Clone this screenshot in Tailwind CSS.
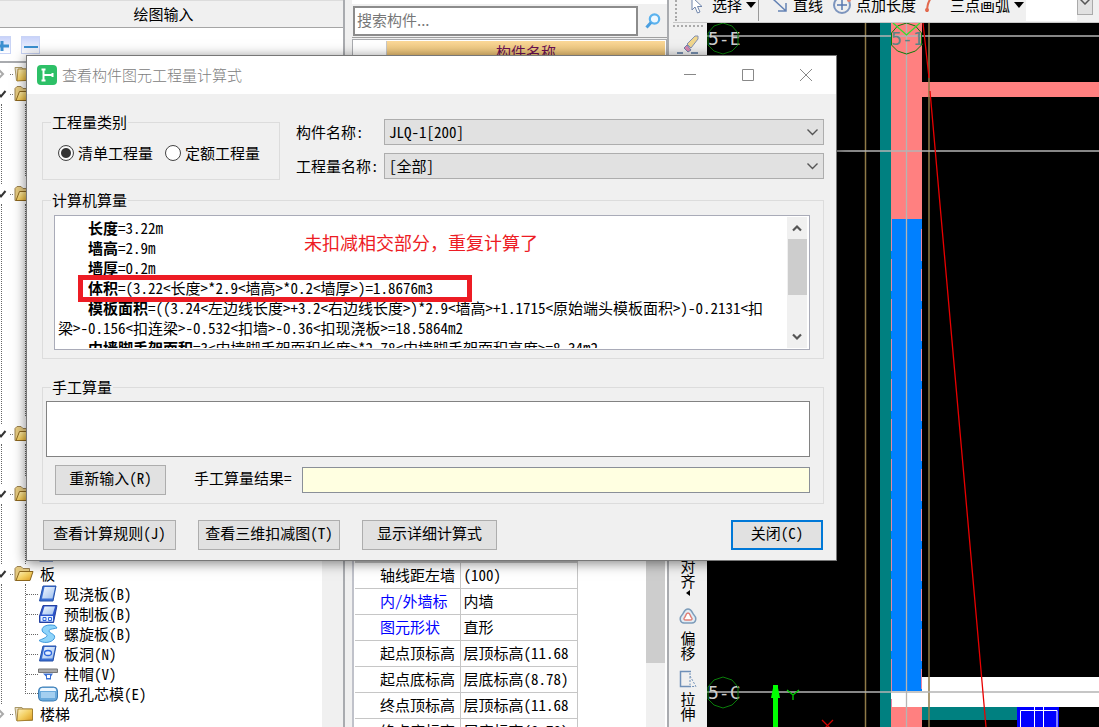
<!DOCTYPE html>
<html lang="zh-CN">
<head>
<meta charset="utf-8">
<title>查看构件图元工程量计算式</title>
<script src="https://cdn.jsdelivr.net/npm/@tailwindcss/browser@4"></script>
</head>
<body class="relative h-screen overflow-hidden bg-[#f0f0f0] font-['Noto_Sans_Mono_CJK_SC','Noto_Sans_CJK_SC',monospace] text-[15px] leading-5 text-black">

<svg class="absolute h-0 w-0" aria-hidden="true">
  <defs>
    <linearGradient id="gold" x1="0" y1="0" x2="1" y2="1"><stop offset="0" stop-color="#fff3c0"/><stop offset=".5" stop-color="#f3cf62"/><stop offset="1" stop-color="#dc9a20"/></linearGradient>
    <linearGradient id="sky" x1="0" y1="0" x2="1" y2="1"><stop offset="0" stop-color="#f2f8ff"/><stop offset="1" stop-color="#9fc0ee"/></linearGradient>
    <symbol id="closed" viewBox="0 0 20 20"><path d="M1 3.500h7l1 1.500h9.500v11.500h-16z" fill="#e8e0c8" stroke="#a89868"/><path d="M4 5h14.500v11L3 17z" fill="url(#gold)" stroke="#9b7423" stroke-width=".8"/></symbol>
    <symbol id="open" viewBox="0 0 20 20"><path d="M1 4.500l2-2h4l2 2h6.500v12H1z" fill="#e5ca80" stroke="#9b8150"/><path d="M5.500 7.500H19L16 16.500H2z" fill="url(#gold)" stroke="#8c661c"/></symbol>
    <symbol id="slab" viewBox="0 0 20 20"><path d="M5 2h13l-3 15H1.500z" fill="#3a6fd4" stroke="#2450a8"/><path d="M6.500 3H17l-2.500 11.500H4z" fill="url(#sky)"/></symbol>
  </defs>
</svg>

<main class="flex h-full">
  <aside class="flex w-[345px] shrink-0 flex-col border-r-2 border-[#a9abaf] bg-white">
    <h2 class="h-7 shrink-0 border-t border-b border-t-[#dcdcdc] border-b-[#a5a5a5] bg-[#f0f0f0] pr-4 text-center leading-[25px]">绘图输入</h2>
    <div class="flex h-[35px] shrink-0 items-start border-b-2 border-[#a9abaf] pt-2">
      <button type="button" aria-label="展开" class="-ml-2 flex h-[18px] w-[19px] items-center justify-center border border-[#c9d4f6] bg-gradient-to-b from-[#c8d2fa] to-white"><svg class="h-4 w-4" viewBox="0 0 16 16"><path d="M1 9h14M8 4v10" stroke="#3c8fd0" stroke-width="3"/></svg></button>
      <button type="button" aria-label="折叠" class="ml-[10px] flex h-[18px] w-[19px] items-center justify-center border border-[#c9d4f6] bg-gradient-to-b from-[#c8d2fa] to-white"><svg class="h-4 w-4" viewBox="0 0 16 16"><path d="M1 10h14" stroke="#3c8fd0" stroke-width="2"/></svg></button>
    </div>
    <div class="flex min-h-0 flex-1">
      <ul class="min-w-0 flex-1 overflow-hidden pt-px">
        <li class="flex h-5 items-center"><svg class="h-5 w-[14px]" viewBox="0 0 14 20" fill="none"><path d="M-1 6l4 4-4 4" stroke="#aaa" stroke-width="2"/><path d="M10 10.500h4" stroke="#777" stroke-dasharray="1 1"/></svg><svg class="h-5 w-5"><use href="#closed"/></svg></li>
        <li>
          <div class="flex h-5 items-center"><svg class="h-5 w-[14px]" viewBox="0 0 14 20" fill="none"><path d="M-1 10l2 2.500L5.500 7" stroke="#333" stroke-width="2"/><path d="M10 10.500h4" stroke="#777" stroke-dasharray="1 1"/></svg><svg class="h-5 w-5"><use href="#open"/></svg></div>
          <div class="ml-px h-20 border-l border-dotted border-[#666]"><div class="ml-[23px] h-[72px] border-l border-dotted border-[#666]"></div></div>
        </li>
        <li>
          <div class="flex h-5 items-center"><svg class="h-5 w-[14px]" viewBox="0 0 14 20" fill="none"><path d="M-1 10l2 2.500L5.500 7" stroke="#333" stroke-width="2"/><path d="M10 10.500h4" stroke="#777" stroke-dasharray="1 1"/></svg><svg class="h-5 w-5"><use href="#open"/></svg></div>
          <div class="ml-px h-[220px] border-l border-dotted border-[#666]"><div class="ml-[23px] h-[212px] border-l border-dotted border-[#666]"></div></div>
        </li>
        <li>
          <div class="flex h-5 items-center"><svg class="h-5 w-[14px]" viewBox="0 0 14 20" fill="none"><path d="M-1 10l2 2.500L5.500 7" stroke="#333" stroke-width="2"/><path d="M10 10.500h4" stroke="#777" stroke-dasharray="1 1"/></svg><svg class="h-5 w-5"><use href="#open"/></svg></div>
          <div class="ml-px h-10 border-l border-dotted border-[#666]"><div class="ml-[23px] h-8 border-l border-dotted border-[#666]"></div></div>
        </li>
        <li>
          <div class="flex h-5 items-center"><svg class="h-5 w-[14px]" viewBox="0 0 14 20" fill="none"><path d="M-1 10l2 2.500L5.500 7" stroke="#333" stroke-width="2"/><path d="M10 10.500h4" stroke="#777" stroke-dasharray="1 1"/></svg><svg class="h-5 w-5"><use href="#open"/></svg></div>
          <div class="ml-px flex h-[60px] items-end border-l border-dotted border-[#666]"><div class="ml-[23px] h-[60px] border-l border-dotted border-[#666]"></div><svg class="ml-3 h-5 w-5"><use href="#slab"/></svg></div>
        </li>
        <li>
          <div class="flex h-5 items-center"><svg class="h-5 w-[14px]" viewBox="0 0 14 20" fill="none"><path d="M-1 10l2 2.500L5.500 7" stroke="#333" stroke-width="2"/><path d="M10 10.500h4" stroke="#777" stroke-dasharray="1 1"/></svg><svg class="mr-[6px] h-5 w-5"><use href="#open"/></svg>板</div>
          <div class="ml-px border-l border-dotted border-[#666]">
            <ul class="ml-[23px]">
              <li class="flex h-5 items-center border-l border-dotted border-[#666]"><span class="w-3 border-t border-dotted border-[#666]"></span><svg class="mr-[6px] h-5 w-5"><use href="#slab"/></svg>现浇板(B)</li>
              <li class="flex h-5 items-center border-l border-dotted border-[#666]"><span class="w-3 border-t border-dotted border-[#666]"></span><svg class="mr-[6px] h-5 w-5" viewBox="0 0 20 20"><path d="M5 1.500h14L15.500 18.500H1.500V12z" fill="#2c55cc" stroke="#2340a0"/><path d="M6.500 2.500H17l-2.500 8H4z" fill="url(#sky)"/><path d="M2.500 12h12.500v5.500H2.500z" fill="#e6f0ff"/><path d="M5 13.500h3v3H5zM10.500 13.500h3v3h-3z" fill="none" stroke="#2c66dd"/></svg>预制板(B)</li>
              <li class="flex h-5 items-center border-l border-dotted border-[#666]"><span class="w-3 border-t border-dotted border-[#666]"></span><svg class="mr-[6px] h-5 w-5" viewBox="0 0 20 20"><path d="M17 1.500C10 0 4 2 4 6c0 3.500 5 3.500 5 5.500S4 15 1 16.500c4 3 12 2.500 15-1.500 3-5-5-5.500-5-8 0-2 4-2 8-3z" fill="#8ed4fa" stroke="#3c98dc"/></svg>螺旋板(B)</li>
              <li class="flex h-5 items-center border-l border-dotted border-[#666]"><span class="w-3 border-t border-dotted border-[#666]"></span><svg class="mr-[6px] h-5 w-5" viewBox="0 0 20 20"><use href="#slab" width="20" height="20"/><ellipse cx="10" cy="9" rx="3.500" ry="2.500" fill="#e3eeff" stroke="#2c66dd" stroke-width="1.300"/></svg>板洞(N)</li>
              <li class="flex h-5 items-center border-l border-dotted border-[#666]"><span class="w-3 border-t border-dotted border-[#666]"></span><svg class="mr-[6px] h-5 w-5" viewBox="0 0 20 20"><path d="M.5 5h19v3.500H.5z" fill="#aaa" stroke="#777"/><path d="M5 9.500h10l-2 3v3H8v-3z" fill="#3a70d4"/><path d="M9 11h3v3H9z" fill="#fff"/></svg>柱帽(V)</li>
              <li class="flex h-5 items-start"><span class="h-[10px] w-[13px] border-b border-l border-dotted border-[#666]"></span><svg class="mr-[6px] h-5 w-5" viewBox="0 0 20 20"><rect x=".5" y="3" width="19" height="14" rx="4" fill="#6aaadc" stroke="#3c7cb4"/><path d="M2 7V6c0-1 1-2 2-2h12c1 0 2 1 2 2v1z" fill="#eef7ff"/><path d="M3 8h14v6H3z" fill="#a4cff0"/></svg>成孔芯模(E)</li>
            </ul>
          </div>
        </li>
        <li class="flex h-5 items-center"><svg class="h-5 w-[14px]" viewBox="0 0 14 20" fill="none"><path d="M-1 6l4 4-4 4" stroke="#aaa" stroke-width="2"/><path d="M10 10.500h4" stroke="#777" stroke-dasharray="1 1"/></svg><svg class="mr-[6px] h-5 w-5"><use href="#closed"/></svg>楼梯</li>
        <li class="flex h-5 items-center pl-[14px]"><svg class="mr-[6px] h-5 w-5"><use href="#closed"/></svg>装修</li>
      </ul>
      <div class="w-[21px] bg-[#f0f0f0]"></div>
    </div>
  </aside>

  <section class="ml-[7px] flex w-[317px] shrink-0 flex-col border-r-2 border-[#a9abaf]">
    <div class="flex h-[38px] shrink-0 items-end border-t-4 border-b border-t-white border-b-[#a0a0a0]">
      <input type="text" aria-label="搜索构件" placeholder="搜索构件..." class="mb-px ml-px h-[30px] w-[285px] border-2 border-[#8c8c8c] bg-white px-[2px] pb-1 font-['Noto_Sans_CJK_SC',sans-serif] placeholder:text-[#777]">
      <button type="button" aria-label="搜索" class="flex h-8 flex-1 items-center justify-center"><svg class="h-4 w-4" viewBox="0 0 16 16" fill="none"><circle cx="9.500" cy="6" r="4.700" stroke="#5bb2ee" stroke-width="2.200" fill="#eef8ff"/><path d="M6 9.500L1.500 14.500" stroke="#4a9fe0" stroke-width="3"/></svg></button>
    </div>
    <div class="mt-px flex h-[522px] shrink-0 flex-col border border-[#a9abaf] bg-white p-px">
      <div class="flex h-[26px]"><span class="w-[33px] border-r border-[#c8c8c8]"></span><span class="flex-1 bg-gradient-to-b from-[#fbd898] to-[#d9ab52] pt-px text-center text-[#6a0f52]">构件名称</span></div>
    </div>
    <div class="flex min-h-0 flex-1 border-l-2 border-[#c0c2ca] bg-white">
      <table class="ml-px w-[223px] shrink-0 table-fixed self-start border-collapse border-t-2 border-[#c6c6c6] text-left">
        <colgroup><col class="w-[105px]"><col></colgroup>
        <tbody>
          <tr class="h-[26px] border-b border-[#c6c6c6]"><th class="border-r border-[#c6c6c6] pl-[25px] font-normal whitespace-nowrap">轴线距左墙</th><td class="overflow-hidden border-r border-[#c6c6c6] pl-[3px] whitespace-nowrap">(100)</td></tr>
          <tr class="h-[26px] border-b border-[#c6c6c6]"><th class="border-r border-[#c6c6c6] pl-[25px] font-normal whitespace-nowrap text-[#0000ff]">内/外墙标</th><td class="overflow-hidden border-r border-[#c6c6c6] pl-[3px] whitespace-nowrap">内墙</td></tr>
          <tr class="h-[26px] border-b border-[#c6c6c6]"><th class="border-r border-[#c6c6c6] pl-[25px] font-normal whitespace-nowrap text-[#0000ff]">图元形状</th><td class="overflow-hidden border-r border-[#c6c6c6] pl-[3px] whitespace-nowrap">直形</td></tr>
          <tr class="h-[26px] border-b border-[#c6c6c6]"><th class="border-r border-[#c6c6c6] pl-[25px] font-normal whitespace-nowrap">起点顶标高</th><td class="overflow-hidden border-r border-[#c6c6c6] pl-[3px] whitespace-nowrap">层顶标高(11.68</td></tr>
          <tr class="h-[26px] border-b border-[#c6c6c6]"><th class="border-r border-[#c6c6c6] pl-[25px] font-normal whitespace-nowrap">起点底标高</th><td class="overflow-hidden border-r border-[#c6c6c6] pl-[3px] whitespace-nowrap">层底标高(8.78)</td></tr>
          <tr class="h-[26px] border-b border-[#c6c6c6]"><th class="border-r border-[#c6c6c6] pl-[25px] font-normal whitespace-nowrap">终点顶标高</th><td class="overflow-hidden border-r border-[#c6c6c6] pl-[3px] whitespace-nowrap">层顶标高(11.68</td></tr>
          <tr class="h-[26px] border-b border-[#c6c6c6]"><th class="border-r border-[#c6c6c6] pl-[25px] font-normal whitespace-nowrap">终点底标高</th><td class="overflow-hidden border-r border-[#c6c6c6] pl-[3px] whitespace-nowrap">层底标高(8.78)</td></tr>
        </tbody>
      </table>
      <div class="mr-[2px] ml-auto w-[19px] bg-[#f0f0f0]"><div class="h-[102px] bg-[#cdcdcd]"></div></div>
    </div>
  </section>

  <section class="ml-1 flex min-w-0 flex-1 flex-col">
    <div class="flex h-[23px] shrink-0 flex-col justify-end overflow-hidden border-b border-[#c8c8c8] pb-px">
      <div class="flex h-8 shrink-0 items-center whitespace-nowrap">
        <span class="ml-[2px] h-full border-l-2 border-dotted border-[#aaa]"></span>
        <button type="button" class="ml-3 flex items-center"><svg class="mr-[7px] h-5 w-4" viewBox="0 0 16 20"><path d="M3 2v13l3-3 2.500 6 2.500-1-2.500-5.500H13z" fill="#fff" stroke="#7086ac"/></svg>选择<svg class="ml-1 h-[6px] w-[10px]" viewBox="0 0 10 6"><path d="M0 0h10L5 6z"/></svg></button>
        <span class="ml-[2px] h-full border-l border-[#999]"></span>
        <button type="button" class="ml-[13px] flex items-center"><svg class="mr-[5px] h-5 w-4" viewBox="0 0 16 20"><path d="M1 4l13 12M14 8v8H6" fill="none" stroke="#6482b4" stroke-width="1.500"/></svg>直线</button>
        <button type="button" class="ml-[9px] flex items-center"><svg class="mr-1 h-5 w-5" viewBox="0 0 20 20" fill="none"><circle cx="10" cy="10" r="8" stroke="#7d95be" stroke-width="2"/><path d="M10 5v10M5 10h10" stroke="#5878b0" stroke-width="1.500"/><circle cx="17" cy="5" r="2" fill="#e38372"/></svg>点加长度</button>
        <button type="button" class="ml-[6px] flex items-center"><svg class="mr-[10px] h-5 w-[18px]" viewBox="0 0 18 20" fill="none"><path d="M5 17C5 10 7 5 10 2" stroke="#e2694e" stroke-width="2"/><circle cx="5" cy="15" r="2" fill="#e2694e"/></svg>三点画弧<svg class="ml-1 h-[6px] w-[10px]" viewBox="0 0 10 6"><path d="M0 0h10L5 6z"/></svg></button>
        <span class="ml-[2px] h-full w-[51px] shrink-0 bg-white"></span>
        <button type="button" aria-label="选项" class="mb-2 flex h-7 w-4 shrink-0 items-end justify-center border border-[#aaa] bg-[#e1e1e1] pb-[9px]"><svg class="h-[6px] w-[10px]" viewBox="0 0 10 6"><path d="M0 0l5 5 5-5" fill="none" stroke="#555" stroke-width="1.500"/></svg></button>
      </div>
    </div>
    <div class="flex min-h-0 flex-1">
      <div class="flex w-[34px] shrink-0 flex-col items-center pr-1 leading-[15px]">
        <span class="mt-[2px] mb-2 w-full border-t-2 border-dotted border-[#aaa]"></span>
        <svg class="h-5 w-[22px]" viewBox="0 0 22 20"><path d="M0 18h6M14 18h7" stroke="#7890b0" stroke-width="2"/><path d="M7 13l4 4 3-2-4-5z" fill="#d988b0" stroke="#7180a8"/><path d="M10 9l4 4 7-9V1h-3z" fill="#f0d68c" stroke="#8390b0"/></svg>
        <button type="button" class="mt-[503px] flex flex-col items-center"><span>对</span><span>齐</span><svg class="mt-[2px] h-[6px] w-1" viewBox="0 0 4 6"><path d="M4 0v6L0 3z"/></svg></button>
        <button type="button" class="mt-3 flex flex-col items-center"><svg class="mb-[6px] h-4 w-[18px]" viewBox="0 0 18 16" fill="none"><path d="M9 1C5 1 5 5 3 7c-3 3-2 8 2 8h8c4 0 5-5 2-8-2-2-2-6-6-6z" stroke="#7d9cba" stroke-width="1.500" fill="#e2ecf4"/><path d="M9 5c-2 0-2 2-3 4-2 2-1 3 1 3h4c2 0 3-1 1-3-1-2-1-4-3-4z" stroke="#e08077" stroke-width="1.500" fill="#fff"/></svg><span>偏</span><span>移</span></button>
        <button type="button" class="mt-[10px] flex flex-col items-center"><svg class="mb-[3px] h-[18px] w-[18px]" viewBox="0 0 18 18" fill="none"><path d="M12 1.500H1.500v15H12" stroke="#6f90b8" stroke-width="1.500"/><path d="M11 3v12M11 6l6 10.500h-6" stroke="#6f90b8" stroke-dasharray="2 1.500"/></svg><span>拉</span><span>伸</span></button>
      </div>
      <svg class="h-full min-w-0 flex-1 bg-black" role="img" aria-label="绘图区">
        <g transform="translate(-707 -23)" fill="none">
          <path d="M880 23h11v2000h-11z" fill="#008080"/>
          <path d="M891 23h31v196h-31zM891 707h31v1300h-31zM922 82h2000v15H922z" fill="#ff8080"/>
          <path d="M891 219h31v472h-31z" fill="#0080ff"/>
          <path d="M891 691h31v16h-31zM922 677h2000v30H922z" fill="#fff"/>
          <path d="M891.500 219v488M921.500 229v460" stroke="#e585a8" stroke-dasharray="32 8"/>
          <path d="M922 707h95v13h-95z" fill="#008080"/>
          <path d="M1017 707h42v60h-42z" fill="#0000ff"/>
          <path d="M1020.500 767v-56.500h36.500V767M1034.500 707v60M1043.500 707v60" stroke="#fff"/>
          <path d="M865.500 23v2000M929 23v2000" stroke="#8f7a48" stroke-width="1.500"/>
          <path d="M707 36h2000M707 151h2000M707 692h2000M906.500 23v2000" stroke="#b4b4b4" stroke-width="1.300"/>
          <path d="M923 23l6 55M930 91l56 636" stroke="#e80000" stroke-width="1.300"/>
          <g font-family="DejaVu Sans Mono, monospace" font-size="18">
            <text x="708" y="45" fill="#ccc">5-E</text>
            <text x="891" y="45" fill="#5c8484">5-1</text>
            <text x="708" y="699" fill="#ccc">5-C</text>
          </g>
          <path id="ring" d="M723 23l9 3 6 7v12l-6 6-9 3-9-3-6-6V33l6-7z" stroke="#0a7d0a"/>
          <use href="#ring" x="183.500"/>
          <use href="#ring" y="654"/>
          <path d="M893 23l13.500 12L920 23" stroke="#2fe02f" stroke-width="1.300"/>
          <path d="M773 767v-69h-2l2-10v-3h5v3l2 10h-2v69z" fill="#00ff00"/>
          <path d="M787 690l6 5 6-5M793 695v5" stroke="#00d000" stroke-width="1.300"/>
          <path d="M822 720l11 11M833 720l-11 11" stroke="#d00000" stroke-width="1.300"/>
        </g>
      </svg>
    </div>
  </section>
</main>

<div role="dialog" aria-labelledby="dlg-title" class="absolute top-[55px] left-[26px] flex w-[811px] flex-col border border-[#777] bg-[#f0f0f0] shadow-[0_2px_12px_rgba(0,0,0,0.5)]">
  <header class="flex h-[38px] items-center bg-white pl-[10px]">
    <svg class="h-5 w-5" viewBox="0 0 20 20"><rect width="20" height="20" rx="4" fill="#2dc067"/><path d="M4.500 4.500h4M6.500 4.500v11M4.500 15.500h4M6.500 10H16M15.500 8v4" fill="none" stroke="#fff" stroke-width="2"/></svg>
    <h1 id="dlg-title" class="ml-[5px] pb-px font-['Noto_Sans_CJK_SC',sans-serif] font-light text-[#808080]">查看构件图元工程量计算式</h1>
    <div class="mr-px ml-auto flex h-full">
      <button type="button" aria-label="最小化" class="flex w-[58px] items-center justify-center"><svg class="h-3 w-3" viewBox="0 0 12 12"><path d="M0 5.500h12" stroke="#888"/></svg></button>
      <button type="button" aria-label="最大化" class="flex w-[58px] items-center justify-center"><svg class="h-3 w-3" viewBox="0 0 12 12"><path d="M.5.5h11v11H.5z" fill="none" stroke="#888"/></svg></button>
      <button type="button" aria-label="关闭窗口" class="flex w-[58px] items-center justify-center"><svg class="h-3 w-3" viewBox="0 0 12 12"><path d="M0 0l12 12M12 0L0 12" stroke="#888"/></svg></button>
    </div>
  </header>

  <form class="flex flex-col pt-[18px] pr-3 pb-[10px] pl-[15px]">
    <div class="flex">
      <fieldset class="h-[68px] w-[238px] shrink-0 border border-[#dcdcdc] px-[15px]">
        <legend class="-ml-[7px] px-px">工程量类别</legend>
        <div class="flex pt-[11px]">
          <label class="flex items-center gap-1"><input type="radio" name="kind" checked class="h-4 w-4 appearance-none rounded-full border border-[#444] bg-white bg-radial from-[#333] from-45% to-white to-55% bg-clip-content p-[1px]">清单工程量</label>
          <label class="ml-3 flex items-center gap-1"><input type="radio" name="kind" class="h-4 w-4 appearance-none rounded-full border border-[#444] bg-white">定额工程量</label>
        </div>
      </fieldset>
      <div class="ml-4 grid flex-1 grid-cols-[88px_1fr] content-start items-center gap-y-2 pt-[7px]">
        <label for="comp">构件名称:</label>
        <div class="relative">
          <select id="comp" class="block h-[26px] w-full appearance-none border border-[#adadad] bg-[#e1e1e1] pl-1"><option>JLQ-1[200]</option></select>
          <svg class="pointer-events-none absolute top-[10px] right-[6px] h-[7px] w-[11px]" viewBox="0 0 11 7"><path d="M.5.500l5 5 5-5" fill="none" stroke="#555" stroke-width="1.400"/></svg>
        </div>
        <label for="qty">工程量名称:</label>
        <div class="relative">
          <select id="qty" class="block h-[26px] w-full appearance-none border border-[#adadad] bg-[#e1e1e1] pl-1"><option>[全部]</option></select>
          <svg class="pointer-events-none absolute top-[10px] right-[6px] h-[7px] w-[11px]" viewBox="0 0 11 7"><path d="M.5.500l5 5 5-5" fill="none" stroke="#555" stroke-width="1.400"/></svg>
        </div>
      </div>
    </div>

    <fieldset class="mt-[10px] border border-[#dcdcdc] pr-[13px] pb-2 pl-[11px]">
      <legend class="-ml-[3px] px-px">计算机算量</legend>
      <div class="relative mt-[5px] flex h-[135px] border border-[#a9abb8] bg-white p-px pr-[2px]">
        <div class="h-[131px] min-w-0 flex-1 overflow-hidden pt-px pl-[2px]">
          <p class="whitespace-pre">    <b>长度</b>=3.22m</p>
          <p class="whitespace-pre">    <b>墙高</b>=2.9m</p>
          <p class="whitespace-pre">    <b>墙厚</b>=0.2m</p>
          <p class="whitespace-pre">    <b>体积</b>=(3.22&lt;长度&gt;*2.9&lt;墙高&gt;*0.2&lt;墙厚&gt;)=1.8676m3</p>
          <p class="whitespace-pre">    <b>模板面积</b>=((3.24&lt;左边线长度&gt;+3.2&lt;右边线长度&gt;)*2.9&lt;墙高&gt;+1.1715&lt;原始端头模板面积&gt;)-0.2131&lt;扣</p>
          <p class="whitespace-pre">梁&gt;-0.156&lt;扣连梁&gt;-0.532&lt;扣墙&gt;-0.36&lt;扣现浇板&gt;=18.5864m2</p>
          <p class="whitespace-pre">    <b>内墙脚手架面积</b>=3&lt;内墙脚手架面积长度&gt;*2.78&lt;内墙脚手架面积高度&gt;=8.34m2</p>
        </div>
        <div class="flex w-5 flex-col items-center bg-[#f0f0f0]">
          <svg class="my-[7px] h-2 w-[10px] shrink-0" viewBox="0 0 10 8"><path d="M1 6.500l4-4 4 4" fill="none" stroke="#555" stroke-width="2.200"/></svg>
          <div class="h-14 w-[19px] bg-[#cdcdcd]"></div>
          <svg class="mt-auto mb-[7px] h-2 w-[10px] shrink-0" viewBox="0 0 10 8"><path d="M1 1.500l4 4 4-4" fill="none" stroke="#555" stroke-width="2.200"/></svg>
        </div>
        <div class="absolute top-[59px] left-[23px] h-[27px] w-[394px] border-[5px] border-[#ed1c24]"></div>
        <p class="absolute top-[16px] left-[249px] font-['Noto_Sans_CJK_SC',sans-serif] text-[18px] whitespace-nowrap text-[#ed1c24]">未扣减相交部分，重复计算了</p>
      </div>
    </fieldset>

    <fieldset class="mt-[18px] border border-[#dcdcdc] pr-[13px] pb-2 pl-[3px]">
      <legend class="ml-[5px] px-px" id="manual">手工算量</legend>
      <textarea aria-labelledby="manual" class="mt-1 block h-[56px] w-full resize-none border border-[#828282] bg-white p-1"></textarea>
      <div class="mt-2 flex items-center pl-[9px]">
        <button type="button" class="h-[30px] w-[111px] border border-[#adadad] bg-[#e1e1e1] pb-1">重新输入(R)</button>
        <label for="result" class="ml-7 pb-1">手工算量结果=</label>
        <input id="result" type="text" class="ml-[10px] h-[26px] flex-1 border border-[#8a8f98] bg-[#ffffe1] px-1">
      </div>
    </fieldset>

    <div class="mt-4 flex gap-[22px] pl-px">
      <button type="button" class="h-[30px] w-[133px] border border-[#adadad] bg-[#e1e1e1] pb-1">查看计算规则(J)</button>
      <button type="button" class="h-[30px] w-[142px] border border-[#adadad] bg-[#e1e1e1] pb-1">查看三维扣减图(T)</button>
      <button type="button" class="h-[30px] w-[135px] border border-[#adadad] bg-[#e1e1e1] pb-1">显示详细计算式</button>
      <button type="button" class="mr-px ml-auto h-[30px] w-[92px] border-2 border-[#0078d7] bg-[#e1e1e1] pb-1">关闭(C)</button>
    </div>
  </form>
</div>
</body>
</html>
